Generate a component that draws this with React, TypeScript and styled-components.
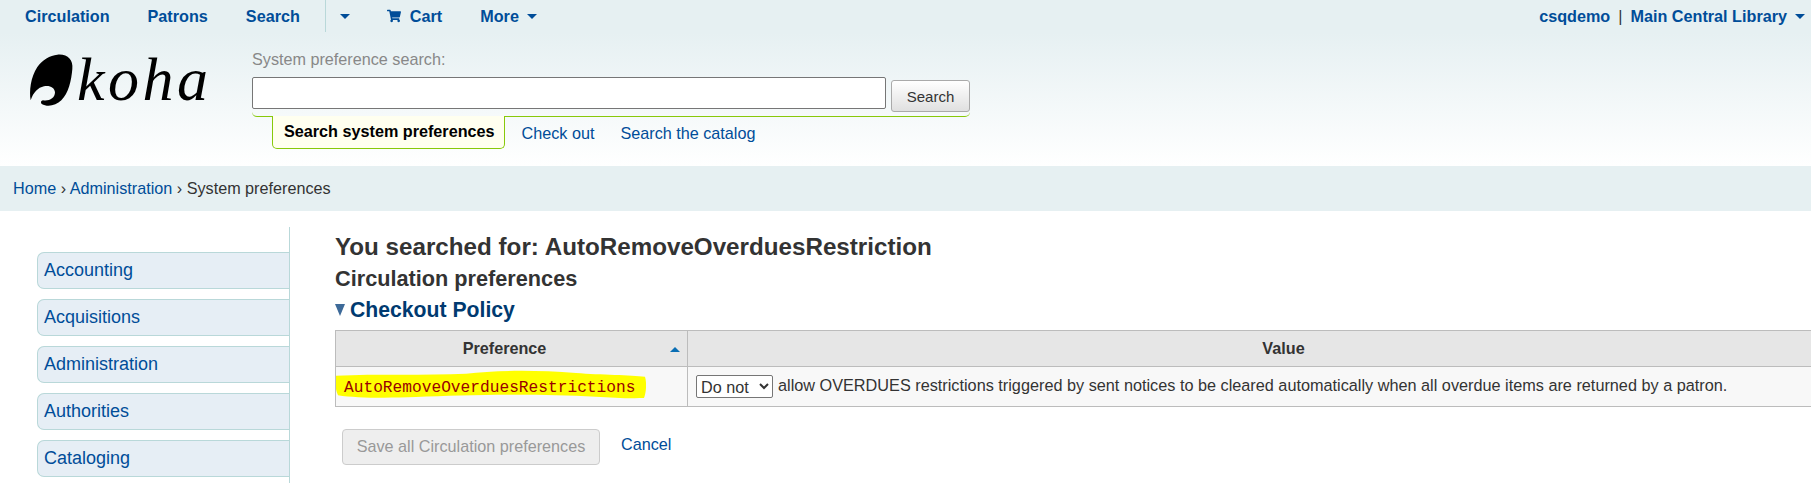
import React from 'react';
import styled, { createGlobalStyle } from 'styled-components';
import { FaShoppingCart } from 'react-icons/fa';

const LINK = '#004d99';
const GREEN = '#88c90a';
const sections = ['Accounting', 'Acquisitions', 'Administration', 'Authorities', 'Cataloging'];

const App: React.FC = () => (
  <>
    <GlobalStyle />
    <Page>
      <Header>
        <Nav>
          <NavLink>Circulation</NavLink>
          <NavLink>Patrons</NavLink>
          <NavLink>Search</NavLink>
          <NavDivider />
          <CaretSlot>
            <Caret />
          </CaretSlot>
          <CartLink>
            <FaShoppingCart size={14} />
            Cart
          </CartLink>
          <MoreLink>
            More
            <Caret />
          </MoreLink>
          <UserMenu>
            <UserLink>csqdemo</UserLink>
            <Pipe>|</Pipe>
            <UserLink>Main Central Library</UserLink>
            <Caret />
          </UserMenu>
        </Nav>
        <Masthead>
          <Logo>
            <svg width="45" height="55" viewBox="55 50 135 165">
              <path
                fill="#000"
                d="M140 55C170 52 188 70 185 98C182 132 174 170 152 192C136 207 112 214 93 203C89 198 91 193 97 192C115 195 133 186 133 168C132 153 116 146 100 150C82 154 68 168 60 192C55 165 60 122 80 92C95 70 118 57 140 55Z"
              />
            </svg>
            <LogoText>koha</LogoText>
          </Logo>
          <SearchArea>
            <SearchLabel>System preference search:</SearchLabel>
            <SearchForm>
              <SearchInput type="text" />
              <SearchButton>Search</SearchButton>
            </SearchForm>
            <Tabs>
              <ActiveTab>Search system preferences</ActiveTab>
              <TabLink>Check out</TabLink>
              <TabLink>Search the catalog</TabLink>
            </Tabs>
          </SearchArea>
        </Masthead>
      </Header>

      <Breadcrumbs>
        <a>Home</a> › <a>Administration</a> › System preferences
      </Breadcrumbs>

      <Main>
        <Sidebar>
          {sections.map((name) => (
            <SideItem key={name}>{name}</SideItem>
          ))}
        </Sidebar>
        <Content>
          <Title>You searched for: AutoRemoveOverduesRestriction</Title>
          <Subtitle>Circulation preferences</Subtitle>
          <SectionTitle>
            <Triangle />
            Checkout Policy
          </SectionTitle>
          <PrefTable>
            <colgroup>
              <col width={352} />
              <col width={1192} />
            </colgroup>
            <thead>
              <tr>
                <SortHeader>
                  Preference
                  <SortArrow />
                </SortHeader>
                <HeaderCell>Value</HeaderCell>
              </tr>
            </thead>
            <tbody>
              <tr>
                <NameCell>
                  <Highlight viewBox="0 0 310 30" preserveAspectRatio="none">
                    <path
                      fill="#ffff00"
                      d="M0 6C40 4 90 6 130 4C160 0 200 0 240 3C265 5 295 5 309 7C311 14 310 24 308 29C280 30 250 26 220 26C170 25 120 26 80 28C50 29 20 29 2 26C-1 20 -1 12 0 6Z"
                    />
                  </Highlight>
                  <PrefName>AutoRemoveOverduesRestrictions</PrefName>
                </NameCell>
                <ValueCell>
                  <ValueSelect defaultValue="no">
                    <option value="no">Do not</option>
                    <option value="yes">Do</option>
                  </ValueSelect>
                  allow OVERDUES restrictions triggered by sent notices to be cleared automatically when all overdue items are returned by a patron.
                </ValueCell>
              </tr>
            </tbody>
          </PrefTable>
          <Actions>
            <SaveButton disabled>Save all Circulation preferences</SaveButton>
            <CancelLink>Cancel</CancelLink>
          </Actions>
        </Content>
      </Main>
    </Page>
  </>
);

export default App;

const GlobalStyle = createGlobalStyle`
  html, body {
    margin: 0;
    padding: 0;
    background: #fff;
    overflow: hidden;
  }

  body {
    font-family: 'Liberation Sans', Arial, sans-serif;
    font-size: 16.2px;
    color: #333;
  }
`;

const Page = styled.div`
  width: 1811px;
  height: 483px;
  overflow: hidden;
`;

const Header = styled.header`
  height: 166px;
  background: linear-gradient(to bottom, #e6f0f2 0%, #e6f0f2 20%, #ffffff 100%);
`;

const Nav = styled.nav`
  display: flex;
  align-items: center;
  height: 32px;
  padding: 0 6px 0 25px;
  font-weight: bold;
  color: ${LINK};
`;

const NavLink = styled.a`
  margin-right: 38px;
  color: ${LINK};
`;

const UserLink = styled.a`
  color: ${LINK};
`;

const NavDivider = styled.span`
  width: 1px;
  height: 32px;
  margin-left: -13px;
  background: #b9d8d9;
`;

const CaretSlot = styled.span`
  display: flex;
  margin-left: 14px;
  margin-right: 37px;
`;

const Caret = styled.span`
  display: inline-block;
  width: 0;
  height: 0;
  border-top: 5px solid ${LINK};
  border-left: 5px solid transparent;
  border-right: 5px solid transparent;
`;

const CartLink = styled.a`
  display: flex;
  align-items: center;
  gap: 9px;
  margin-right: 38px;
`;

const MoreLink = styled.a`
  display: flex;
  align-items: center;
  gap: 8px;
`;

const UserMenu = styled.div`
  display: flex;
  align-items: center;
  margin-left: auto;
  gap: 8px;
`;

const Pipe = styled.span`
  color: #333;
  font-weight: normal;
`;

const Masthead = styled.div`
  display: flex;
`;

const Logo = styled.div`
  display: flex;
  align-items: flex-start;
  width: 223px;
  height: 80px;
  padding: 21px 0 0 29px;
  gap: 3px;
`;

const LogoText = styled.span`
  margin-top: -12px;
  font-family: 'Liberation Serif', serif;
  font-style: italic;
  font-size: 62px;
  line-height: 77px;
  letter-spacing: 3.5px;
  color: #000;
`;

const SearchArea = styled.div`
  width: 718px;
`;

const SearchLabel = styled.div`
  margin-top: 18px;
  height: 27px;
  line-height: 18px;
  color: #888;
`;

const SearchForm = styled.div`
  display: flex;
  align-items: flex-start;
  gap: 5px;
  height: 39px;
  border-bottom: 1px solid ${GREEN};
  border-radius: 0 0 5px 5px;
`;

const SearchInput = styled.input`
  box-sizing: border-box;
  width: 634px;
  height: 32px;
  border: 1px solid #767676;
  border-radius: 2px;
  background: #fff;
`;

const SearchButton = styled.button`
  box-sizing: border-box;
  width: 79px;
  height: 32px;
  margin-top: 3px;
  border: 1px solid #aaa;
  border-radius: 3px;
  background: linear-gradient(to bottom, #fff, #e0e0e0);
  font-family: inherit;
  font-size: 15px;
  color: #333;
`;

const Tabs = styled.div`
  display: flex;
  align-items: flex-start;
  padding-left: 20px;
`;

const ActiveTab = styled.div`
  box-sizing: border-box;
  height: 33px;
  margin-top: -1px;
  padding: 6px 9px 0 11px;
  border: 1px solid ${GREEN};
  border-top: none;
  border-radius: 0 0 5px 5px;
  background: #ffffef;
  font-weight: bold;
  color: #000;
  white-space: nowrap;
`;

const TabLink = styled.a`
  margin: 7px 9px 0 17px;
  color: ${LINK};
  white-space: nowrap;
`;

const Breadcrumbs = styled.div`
  height: 45px;
  padding-left: 13px;
  background: #e6f0f2;
  line-height: 45px;
  color: #333;

  a {
    color: ${LINK};
  }
`;

const Main = styled.main`
  display: flex;
`;

const Sidebar = styled.aside`
  box-sizing: border-box;
  flex: none;
  display: flex;
  flex-direction: column;
  gap: 10px;
  width: 290px;
  height: 256px;
  margin-top: 16px;
  padding: 25px 0 0 37px;
  border-right: 1px solid #b9d8d9;
`;

const SideItem = styled.div`
  flex: none;
  box-sizing: border-box;
  height: 37px;
  padding-left: 6px;
  border: 1px solid #b9d8d9;
  border-right: none;
  border-radius: 7px 0 0 7px;
  background: #e6eef5;
  font-size: 18px;
  line-height: 35px;
  color: ${LINK};
`;

const Content = styled.section`
  flex: none;
  padding: 21px 0 0 45px;
`;

const Title = styled.h1`
  margin: 0;
  font-size: 24.2px;
  line-height: 30px;
  color: #333;
`;

const Subtitle = styled.h2`
  margin: 4px 0 0;
  font-size: 21.7px;
  line-height: 26px;
  color: #333;
`;

const SectionTitle = styled.h3`
  display: flex;
  align-items: center;
  gap: 5px;
  margin: 4px 0 0;
  font-size: 21.2px;
  line-height: 28px;
  color: #003a70;
`;

const Triangle = styled.span`
  width: 0;
  height: 0;
  border-top: 12px solid #3d6a99;
  border-left: 5px solid transparent;
  border-right: 5px solid transparent;
`;

const PrefTable = styled.table`
  width: 1544px;
  margin-top: 6px;
  table-layout: fixed;
  border-collapse: collapse;
`;

const HeaderCell = styled.th`
  height: 35px;
  padding: 0;
  border: 1px solid #bcbcbc;
  background: #e6e6e6;
  text-align: center;
  color: #333;
`;

const SortHeader = styled(HeaderCell)`
  position: relative;
  padding-right: 14px;
`;

const SortArrow = styled.span`
  position: absolute;
  right: 7px;
  top: 16px;
  width: 0;
  height: 0;
  border-bottom: 5px solid #0a6eb4;
  border-left: 5px solid transparent;
  border-right: 5px solid transparent;
`;

const NameCell = styled.td`
  position: relative;
  height: 39px;
  padding: 0 0 0 8px;
  border: 1px solid #bcbcbc;
  background: #f8f8f8;
`;

const Highlight = styled.svg`
  position: absolute;
  left: 0;
  top: 3px;
  width: 310px;
  height: 29px;
`;

const PrefName = styled.span`
  position: relative;
  font-family: 'Liberation Mono', monospace;
  font-size: 16.2px;
  color: #990000;
`;

const ValueCell = styled.td`
  padding: 0 0 0 8px;
  border: 1px solid #bcbcbc;
  background: #f8f8f8;
  font-size: 16.25px;
  color: #333;
  white-space: nowrap;
`;

const ValueSelect = styled.select`
  width: 77px;
  height: 23px;
  margin-right: 5px;
  padding: 0;
  border: 1px solid #767676;
  border-radius: 2px;
  background: #fff;
  font-family: inherit;
  font-size: 16.2px;
  color: #333;
  vertical-align: middle;
`;

const Actions = styled.div`
  display: flex;
  align-items: flex-start;
  margin-top: 22px;
  padding-left: 7px;
`;

const SaveButton = styled.button`
  box-sizing: border-box;
  width: 258px;
  height: 36px;
  padding: 0 0 2px;
  border: 1px solid #ccc;
  border-radius: 4px;
  background: #eee;
  font-family: inherit;
  font-size: 16.2px;
  color: #999;
`;

const CancelLink = styled.a`
  margin: 6px 0 0 21px;
  color: ${LINK};
`;
